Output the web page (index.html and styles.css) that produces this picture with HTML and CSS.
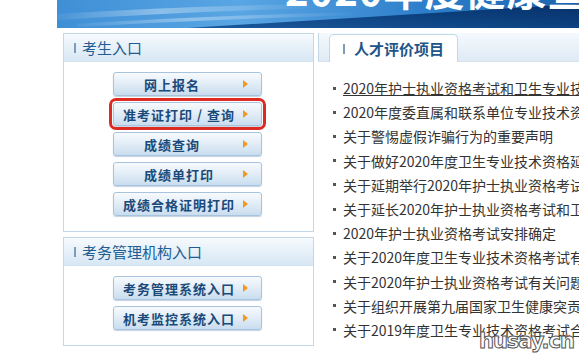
FILE: index.html
```html
<!DOCTYPE html>
<html lang="zh-CN">
<head>
<meta charset="utf-8">
<title>考生入口</title>
<link rel="stylesheet" href="styles.css">
</head>
<body>
<div class="page">
  <div class="banner">
    <svg class="banner-bg" width="522" height="28" viewBox="0 0 522 28" preserveAspectRatio="none">
      <defs>
        <linearGradient id="sky" x1="0" y1="0" x2="1" y2="0">
          <stop offset="0" stop-color="#3f8fd6"/>
          <stop offset="0.35" stop-color="#5aa6e4"/>
          <stop offset="0.7" stop-color="#2e7fcb"/>
          <stop offset="1" stop-color="#1b62ad"/>
        </linearGradient>
        <linearGradient id="navy" x1="0" y1="1" x2="1" y2="0">
          <stop offset="0" stop-color="#1b5a9e"/>
          <stop offset="0.6" stop-color="#0b3f7c"/>
          <stop offset="1" stop-color="#08306a"/>
        </linearGradient>
        <linearGradient id="streak" x1="0" y1="0" x2="1" y2="0">
          <stop offset="0" stop-color="#ffffff" stop-opacity="0.05"/>
          <stop offset="0.4" stop-color="#ffffff" stop-opacity="0.35"/>
          <stop offset="1" stop-color="#ffffff" stop-opacity="0"/>
        </linearGradient>
      </defs>
      <rect width="522" height="28" fill="url(#sky)"/>
      <path d="M0 14 Q120 6 260 4 L260 8 Q120 12 0 20 Z" fill="url(#streak)"/>
      <path d="M20 24 Q140 16 300 12 L300 15 Q140 20 20 27 Z" fill="url(#streak)"/>
      <path d="M130 28 Q330 16 522 4 L522 28 Z" fill="url(#navy)"/>
    </svg>
    <span class="banner-title">2020年度健康宣传</span>
  </div>

  <div class="main">
    <div class="side">
      <section class="box">
        <h2 class="box-head"><span class="bar"></span>考生入口</h2>
        <div class="box-body">
          <a class="btn short" href="#">网上报名<span class="arrow"></span></a>
          <a class="btn active" href="#">准考证打印 / 查询<span class="arrow"></span></a>
          <a class="btn short" href="#">成绩查询<span class="arrow"></span></a>
          <a class="btn short" href="#">成绩单打印<span class="arrow"></span></a>
          <a class="btn" href="#">成绩合格证明打印<span class="arrow"></span></a>
        </div>
      </section>
      <section class="box box-second">
        <h2 class="box-head"><span class="bar"></span>考务管理机构入口</h2>
        <div class="box-body">
          <a class="btn" href="#">考务管理系统入口<span class="arrow"></span></a>
          <a class="btn" href="#">机考监控系统入口<span class="arrow"></span></a>
        </div>
      </section>
    </div>

    <div class="content">
      <div class="tabs">
        <div class="tab"><span class="bar"></span>人才评价项目</div>
      </div>
      <ul class="news">
        <li><a class="hover" href="#">2020年护士执业资格考试和卫生专业技术资格考试</a></li>
        <li><a href="#">2020年度委直属和联系单位专业技术资格评审</a></li>
        <li><a href="#">关于警惕虚假诈骗行为的重要声明</a></li>
        <li><a href="#">关于做好2020年度卫生专业技术资格延期考试</a></li>
        <li><a href="#">关于延期举行2020年护士执业资格考试的通知</a></li>
        <li><a href="#">关于延长2020年护士执业资格考试和卫生专业</a></li>
        <li><a href="#">2020年护士执业资格考试安排确定</a></li>
        <li><a href="#">关于2020年度卫生专业技术资格考试有关问题</a></li>
        <li><a href="#">关于2020年护士执业资格考试有关问题的通知</a></li>
        <li><a href="#">关于组织开展第九届国家卫生健康突贡专家</a></li>
        <li><a href="#">关于2019年度卫生专业技术资格考试合格标准</a></li>
      </ul>
    </div>
  </div>
  <span class="watermark">husay.cn</span>
</div>
</body>
</html>
```

FILE: styles.css
```css
* { box-sizing: border-box; }
html, body { margin: 0; padding: 0; background: #fff; }
body {
  font-family: "Noto Sans CJK SC", "Noto Sans", sans-serif;
  width: 579px;
  height: 356px;
  overflow: hidden;
}
.page {
  position: relative;
  padding-left: 57px;
  height: 356px;
}
.banner {
  position: relative;
  height: 28px;
  overflow: hidden;
}
.banner-bg { display: block; }
.banner-title {
  position: absolute;
  left: 228px;
  top: -31px;
  font-size: 40px;
  line-height: 40px;
  font-weight: 700;
  color: #fff;
  white-space: nowrap;
  letter-spacing: 1px;
}
.main {
  display: flex;
  margin-top: 5px;
  padding-left: 6px;
  gap: 4px;
}
.side {
  width: 251px;
  display: flex;
  flex-direction: column;
  gap: 5px;
}
.box {
  border: 1px solid #c3d7e8;
  background: #fff;
}
.box-head {
  margin: 0;
  height: 28px;
  display: flex;
  align-items: center;
  padding-left: 10px;
  font-size: 15px;
  font-weight: 400;
  color: #235c92;
  background: linear-gradient(#f6fafd, #d7e7f4);
  border-bottom: 1px solid #d4e3f0;
}
.bar {
  width: 2px;
  height: 10px;
  background: #7e9cba;
  margin-right: 6px;
}
.box-body {
  display: flex;
  flex-direction: column;
  align-items: flex-start;
  gap: 6px;
  padding: 10px 0 15px 49px;
}
.btn {
  width: 149px;
  height: 24px;
  display: flex;
  align-items: center;
  padding: 0 13px 0 9px;
  border: 1px solid #a8c4dc;
  border-radius: 3px;
  background: linear-gradient(#f7fafd 0%, #e4eef7 45%, #c9ddef 100%);
  box-shadow: 0 1px 1px rgba(90, 130, 170, 0.35);
  color: #1a4a7a;
  font-size: 13px;
  font-weight: 700;
  letter-spacing: 1px;
  text-decoration: none;
  white-space: nowrap;
}
.btn.short { padding-left: 30px; }
.btn.active {
  outline: 3px solid #dd2a22;
  outline-offset: 1px;
}
.arrow {
  margin-left: auto;
  width: 0;
  height: 0;
  border-top: 4px solid transparent;
  border-bottom: 4px solid transparent;
  border-left: 5px solid #f29a1f;
}
.content {
  flex: 1;
  min-width: 0;
  overflow: hidden;
}
.tabs {
  height: 29px;
  display: flex;
  align-items: flex-end;
  padding-left: 10px;
  border-left: 1px solid #c3d7e8;
  border-bottom: 1px solid #d4e3f0;
  background: linear-gradient(#f4f9fd, #dfeaf5);
}
.tab {
  width: 129px;
  height: 28px;
  margin-bottom: -1px;
  display: flex;
  align-items: center;
  padding-left: 13px;
  background: #fff;
  border: 1px solid #c3d7e8;
  border-bottom: none;
  border-radius: 5px 5px 0 0;
  font-size: 15px;
  font-weight: 700;
  color: #1d5588;
}
.tab .bar { margin-right: 9px; }
.news {
  list-style: none;
  margin: 0;
  padding: 14px 0 0 15px;
}
.news li {
  height: 24.2px;
  display: flex;
  align-items: center;
  white-space: nowrap;
}
.news li::before {
  content: "";
  width: 3px;
  height: 3px;
  background: #555;
  margin-right: 7px;
  flex: none;
}
.news a {
  color: #333;
  font-size: 14px;
  text-decoration: none;
}
.news a.hover { text-decoration: underline; }
.watermark {
  position: absolute;
  right: 5px;
  bottom: 3px;
  font-family: "DejaVu Sans", sans-serif;
  font-size: 21px;
  font-weight: 700;
  color: #fff;
  -webkit-text-stroke: 1px #555;
  letter-spacing: -1px;
}
```
